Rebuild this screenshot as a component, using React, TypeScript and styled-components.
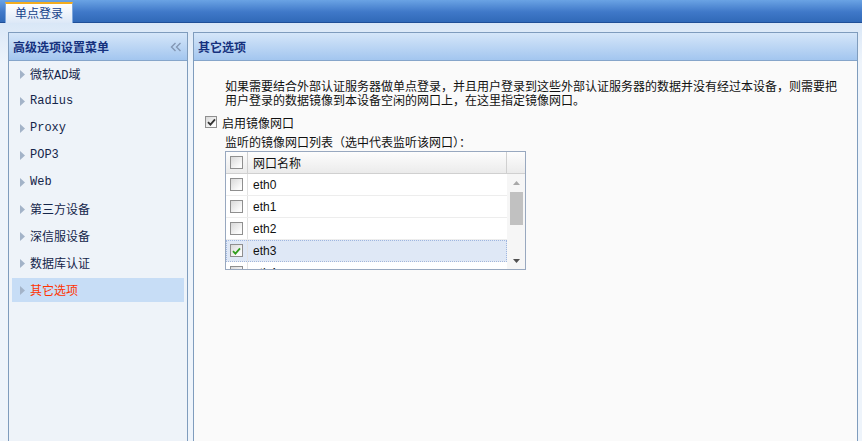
import React from 'react';
import styled, { createGlobalStyle } from 'styled-components';

const GlobalStyle = createGlobalStyle`
  html, body, #root { height: 100%; }
  body {
    margin: 0;
    font-family: "Noto Sans CJK SC", "Liberation Sans", sans-serif;
    font-size: 12px;
    color: #1a2a50;
    background: #eef4fb;
    overflow: hidden;
  }
`;

const menuItems = ['微软AD域', 'Radius', 'Proxy', 'POP3', 'Web', '第三方设备', '深信服设备', '数据库认证', '其它选项'];
const ports = ['eth0', 'eth1', 'eth2', 'eth3', 'eth4'];
const checkedPort = 'eth3';

const Page = styled.div`
  height: 100vh;
  display: flex;
  flex-direction: column;
`;

const TabBar = styled.div`
  height: 23px;
  flex: none;
  box-sizing: border-box;
  display: flex;
  align-items: flex-end;
  padding-left: 5px;
  background: linear-gradient(#6aa3e4, #3f78c8 55%, #3069b8);
  border-bottom: 1px solid #1f4f98;
`;

const Tab = styled.div`
  height: 21px;
  margin-bottom: -1px;
  box-sizing: border-box;
  padding: 0 9px;
  line-height: 18px;
  color: #15428b;
  background: linear-gradient(#ffffff, #dce8f7);
  border: 1px solid #7ea7dc;
  border-top: 2px solid #f2ac1f;
  border-bottom: none;
`;

const Workspace = styled.div`
  flex: 1;
  min-height: 0;
  display: flex;
  gap: 5px;
  padding: 9px 4px 0 8px;
  background: linear-gradient(#d9e7f7, #eef4fb 40px);
`;

const Panel = styled.section<{ $width?: number }>`
  ${(p) => (p.$width ? `width: ${p.$width}px; flex: none;` : 'flex: 1;')}
  box-sizing: border-box;
  display: flex;
  flex-direction: column;
  border: 1px solid #7f9cbd;
  border-bottom: none;
`;

const PanelHeader = styled.header`
  height: 28px;
  flex: none;
  box-sizing: border-box;
  display: flex;
  align-items: center;
  justify-content: space-between;
  padding: 0 5px 0 4px;
  background: linear-gradient(#d5e6f9, #a3c6ef);
  border-bottom: 1px solid #86a5ca;
`;

const PanelTitle = styled.h2`
  margin: 0;
  font-size: 12px;
  font-weight: bold;
  color: #15317e;
  line-height: 16px;
`;

const Collapse = styled.span`
  display: flex;
  align-items: center;
`;

const Menu = styled.ul`
  flex: 1;
  margin: 0;
  padding: 1px 3px;
  list-style: none;
  background: #eef3f9;
`;

const MenuItem = styled.li<{ $active?: boolean }>`
  height: 24px;
  margin-bottom: 3px;
  display: flex;
  align-items: center;
  gap: 5px;
  padding-left: 8px;
  font-family: "Liberation Mono", "Noto Sans CJK SC", monospace;
  font-size: 12px;
  color: ${(p) => (p.$active ? '#ff3300' : '#14254a')};
  background: ${(p) => (p.$active ? '#c7ddf6' : 'transparent')};
`;

const Body = styled.div`
  flex: 1;
  background: #fafafa;
  padding: 18px 12px 0 11px;
`;

const Intro = styled.p`
  margin: 0 0 0 20px;
  line-height: 14px;
  color: #111;
`;

const CheckRow = styled.label`
  margin-top: 7px;
  height: 16px;
  display: flex;
  align-items: center;
  gap: 5px;
  color: #111;
`;

const Group = styled.div`
  margin-left: 20px;
`;

const GroupLabel = styled.div`
  margin-top: 4px;
  height: 16px;
  line-height: 16px;
  color: #111;
`;

const Grid = styled.div`
  margin-top: 1px;
  width: 301px;
  height: 119px;
  box-sizing: border-box;
  display: flex;
  flex-direction: column;
  border: 1px solid #98a8bf;
  background: #fff;
  font-family: "Liberation Sans", "Noto Sans CJK SC", sans-serif;
  font-size: 12px;
  color: #111;
`;

const GridHeader = styled.div`
  height: 22px;
  flex: none;
  box-sizing: border-box;
  display: flex;
  background: linear-gradient(#fdfdfd, #ebebeb);
  border-bottom: 1px solid #d0d0d0;
`;

const CheckCell = styled.div<{ $line?: string }>`
  width: 21px;
  flex: none;
  display: flex;
  align-items: center;
  justify-content: center;
  border-right: 1px solid ${(p) => p.$line || '#d0d0d0'};
`;

const NameCell = styled.div<{ $divider?: boolean }>`
  flex: 1;
  display: flex;
  align-items: center;
  padding-left: 5px;
  ${(p) => (p.$divider ? 'border-right: 1px solid #d0d0d0;' : '')}
`;

const HeaderSpacer = styled.div`
  width: 18px;
  flex: none;
`;

const GridBody = styled.div`
  flex: 1;
  min-height: 0;
  display: flex;
`;

const RowList = styled.div`
  flex: 1;
  overflow: hidden;
`;

const Row = styled.div<{ $selected?: boolean }>`
  height: 22px;
  box-sizing: border-box;
  display: flex;
  border-bottom: 1px solid #ededed;
  ${(p) => (p.$selected ? 'background: #dfe8f6; outline: 1px dotted #9fb6e0; outline-offset: -1px;' : '')}
`;

const ScrollBar = styled.div`
  width: 18px;
  flex: none;
  display: flex;
  flex-direction: column;
  background: #f6f6f6;
`;

const ScrollButton = styled.div`
  height: 17px;
  flex: none;
  display: flex;
  align-items: center;
  justify-content: center;
`;

const ScrollTrack = styled.div`
  flex: 1;
  padding: 1px 2px 0 3px;
`;

const Thumb = styled.div`
  height: 33px;
  background: #c1c1c1;
`;

const Box = styled.span<{ $size?: number }>`
  width: ${(p) => p.$size || 13}px;
  height: ${(p) => p.$size || 13}px;
  box-sizing: border-box;
  flex: none;
  display: flex;
  align-items: center;
  justify-content: center;
  border: 1px solid #8f8f8f;
  background: linear-gradient(135deg, #d9d9d9, #fbfbfb 80%);
`;

const Check = ({ color }: { color: string }) => (
  <svg width="9" height="8" viewBox="0 0 9 8">
    <path d="M1 4.2 L3.4 6.6 L8 1.4" fill="none" stroke={color} strokeWidth="1.8" />
  </svg>
);

const Arrow = () => (
  <svg width="5" height="9" viewBox="0 0 5 9">
    <polygon points="0,0 5,4.5 0,9" fill="#a3b3c8" />
  </svg>
);

const DoubleChevron = () => (
  <svg width="12" height="10" viewBox="0 0 12 10">
    <path d="M5.5 1 L1.5 5 L5.5 9 M10.5 1 L6.5 5 L10.5 9" fill="none" stroke="#8497b4" strokeWidth="1.4" />
  </svg>
);

const Triangle = ({ up, color }: { up?: boolean; color: string }) => (
  <svg width="7" height="4" viewBox="0 0 7 4">
    <polygon points={up ? '0,4 7,4 3.5,0' : '0,0 7,0 3.5,4'} fill={color} />
  </svg>
);

export default function App() {
  return (
    <Page>
      <GlobalStyle />
      <TabBar>
        <Tab>单点登录</Tab>
      </TabBar>
      <Workspace>
        <Panel $width={180}>
          <PanelHeader>
            <PanelTitle>高级选项设置菜单</PanelTitle>
            <Collapse>
              <DoubleChevron />
            </Collapse>
          </PanelHeader>
          <Menu>
            {menuItems.map((item) => (
              <MenuItem key={item} $active={item === '其它选项'}>
                <Arrow />
                {item}
              </MenuItem>
            ))}
          </Menu>
        </Panel>

        <Panel>
          <PanelHeader>
            <PanelTitle>其它选项</PanelTitle>
          </PanelHeader>
          <Body>
            <Intro>
              如果需要结合外部认证服务器做单点登录，并且用户登录到这些外部认证服务器的数据并没有经过本设备，则需要把用户登录的数据镜像到本设备空闲的网口上，在这里指定镜像网口。
            </Intro>
            <CheckRow>
              <Box $size={12}>
                <Check color="#333" />
              </Box>
              启用镜像网口
            </CheckRow>
            <Group>
              <GroupLabel>监听的镜像网口列表（选中代表监听该网口）：</GroupLabel>
              <Grid>
                <GridHeader>
                  <CheckCell>
                    <Box />
                  </CheckCell>
                  <NameCell $divider>网口名称</NameCell>
                  <HeaderSpacer />
                </GridHeader>
                <GridBody>
                  <RowList>
                    {ports.map((port) => (
                      <Row key={port} $selected={port === checkedPort}>
                        <CheckCell $line="#e2e2e2">
                          <Box>{port === checkedPort && <Check color="#2f9e1c" />}</Box>
                        </CheckCell>
                        <NameCell>{port}</NameCell>
                      </Row>
                    ))}
                  </RowList>
                  <ScrollBar>
                    <ScrollButton>
                      <Triangle up color="#a8a8a8" />
                    </ScrollButton>
                    <ScrollTrack>
                      <Thumb />
                    </ScrollTrack>
                    <ScrollButton>
                      <Triangle color="#505050" />
                    </ScrollButton>
                  </ScrollBar>
                </GridBody>
              </Grid>
            </Group>
          </Body>
        </Panel>
      </Workspace>
    </Page>
  );
}
